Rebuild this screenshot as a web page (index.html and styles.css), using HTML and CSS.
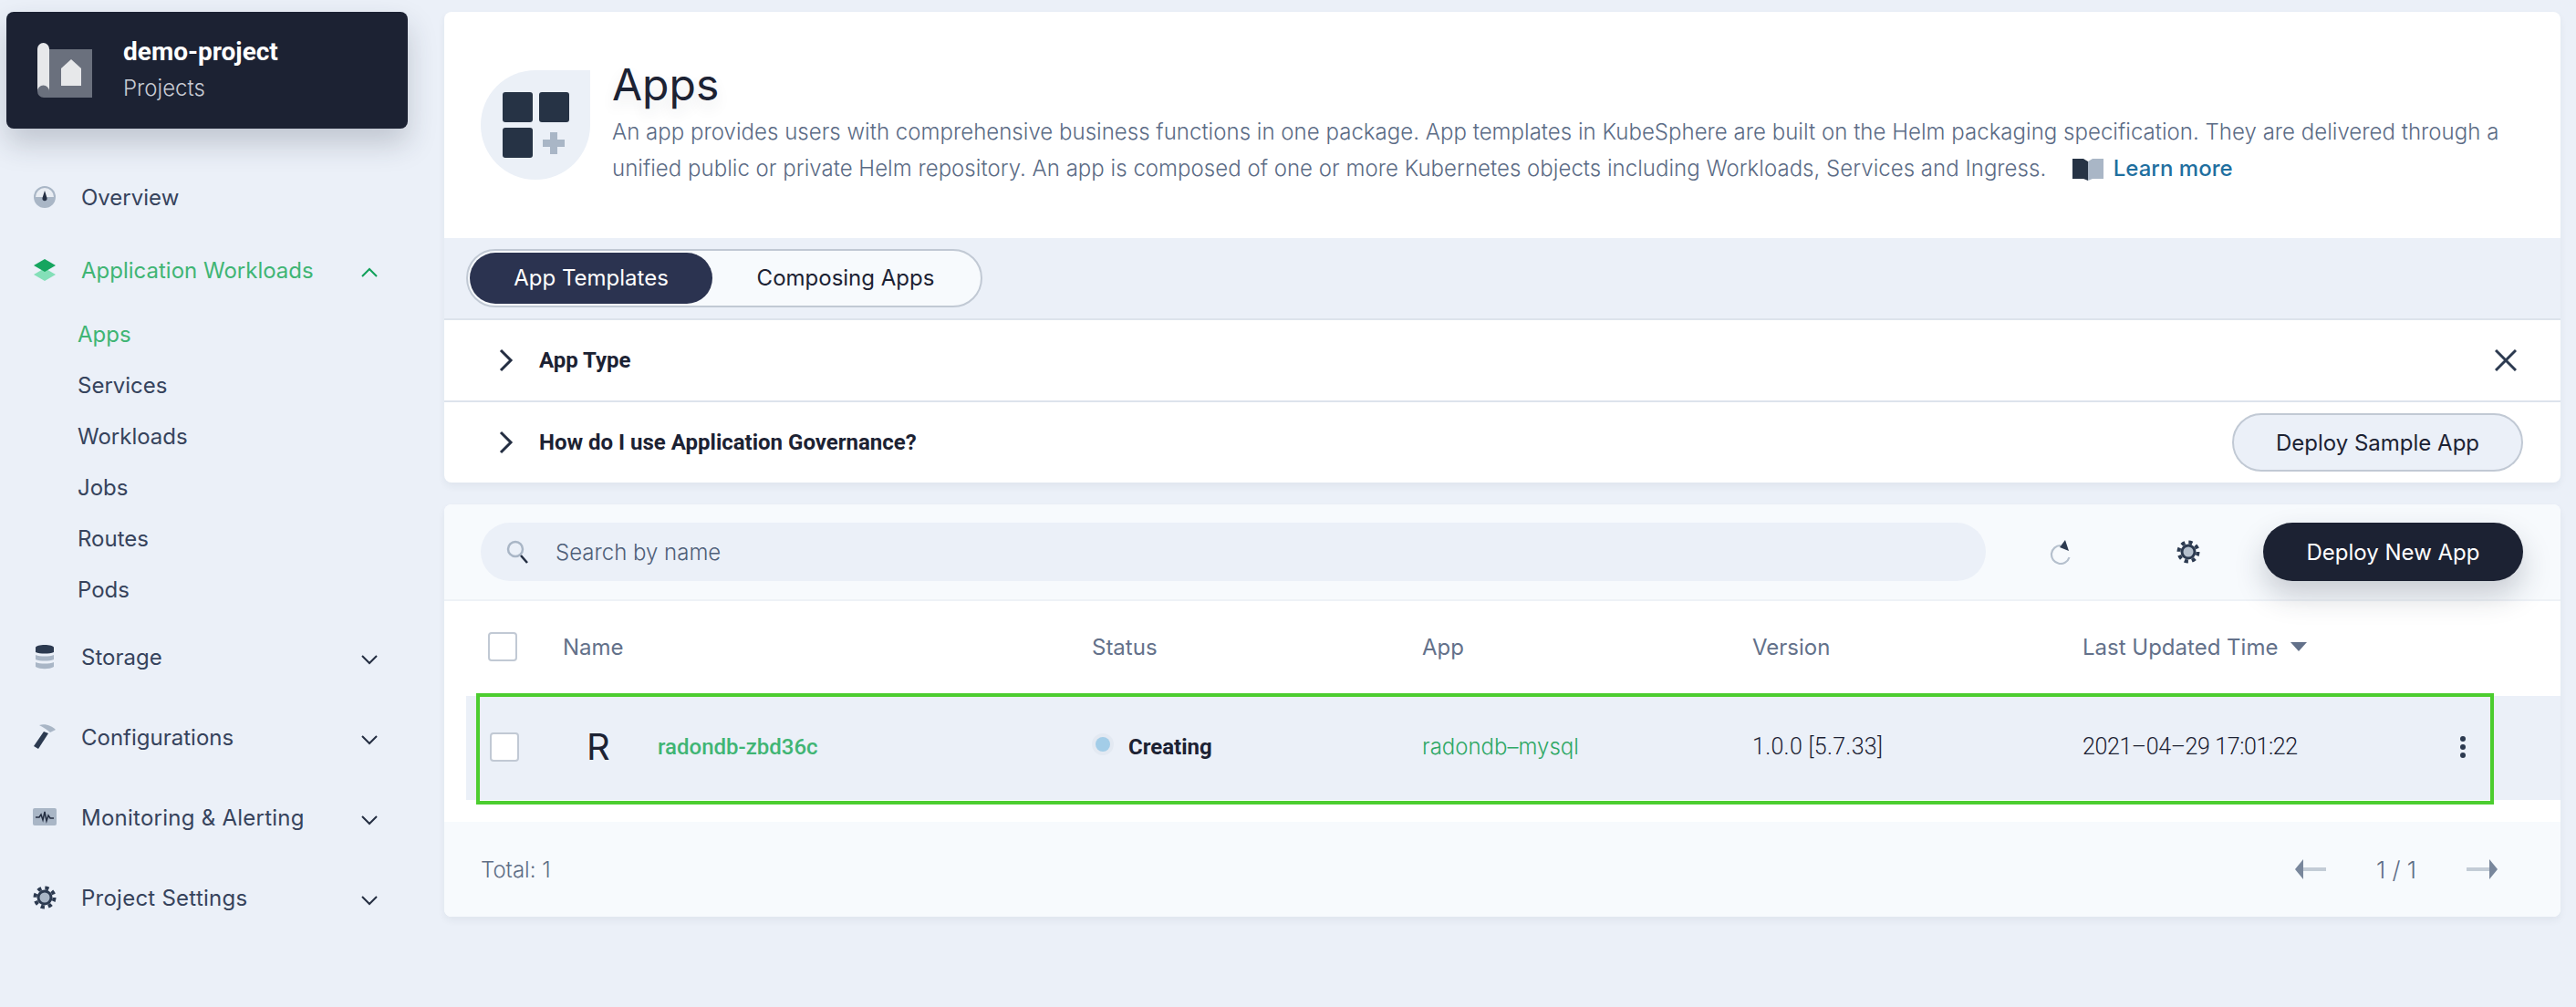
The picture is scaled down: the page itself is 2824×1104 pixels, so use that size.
FILE: index.html
```html
<!DOCTYPE html>
<html lang="en">
<head>
    <meta charset="UTF-8">
    <title>Apps - demo-project</title>
    <link rel="stylesheet" href="styles.css">
</head>
<body>
<div class="page">
    <aside class="sidebar">
        <div class="project-card">
            <svg class="project-logo" width="60" height="60" viewBox="0 0 60 60">
                <path d="M13 7H60V60H7A7 7 0 0 1 0 53V40H13Z" fill="#6a707d"/>
                <path d="M0 6.5A6.5 6.5 0 0 1 13 6.5V53A6.5 6.5 0 0 0 0 53Z" fill="#e7e8ea"/>
                <path d="M37 18L48 28V47H26V28Z" fill="#e7e8ea"/>
            </svg>
            <div>
                <div class="project-name">demo-project</div>
                <div class="project-type">Projects</div>
            </div>
        </div>
        <nav class="nav">
            <div class="nav-item nav-overview">
                <svg class="nav-icon" width="26" height="26" viewBox="0 0 26 26">
                    <circle cx="13" cy="13" r="12" fill="#a9b6c6"/>
                    <path d="M3 13A10 10 0 0 1 23 13Z" fill="#e9edf3"/>
                    <path d="M13 6L15.5 14A2.6 2.6 0 1 1 10.5 14Z" fill="#242e42"/>
                </svg>
                <span>Overview</span>
            </div>
            <div class="nav-item nav-active">
                <svg class="nav-icon" width="26" height="26" viewBox="0 0 26 26">
                    <path d="M13 11L25 18L13 25L1 18Z" fill="#84dfb8"/>
                    <path d="M13 1L25 8L13 15L1 8Z" fill="#16a55f"/>
                </svg>
                <span>Application Workloads</span>
                <svg class="chevron" width="18" height="12" viewBox="0 0 18 12"><path d="M1 10L9 2L17 10" fill="none" stroke="#10a05a" stroke-width="2"/></svg>
            </div>
            <div class="sub-nav">
                <div class="sub-item sub-active">Apps</div>
                <div class="sub-item">Services</div>
                <div class="sub-item">Workloads</div>
                <div class="sub-item">Jobs</div>
                <div class="sub-item">Routes</div>
                <div class="sub-item">Pods</div>
            </div>
            <div class="nav-item">
                <svg class="nav-icon" width="26" height="28" viewBox="0 0 26 28">
                    <path d="M3 12C8 14 18 14 23 12V17C18 19 8 19 3 17ZM3 20C8 22 18 22 23 20V25C18 28 8 28 3 25Z" fill="#a9b6c6"/>
                    <path d="M3 4C3 0 23 0 23 4V9C18 11 8 11 3 9Z" fill="#2c3a50"/>
                </svg>
                <span>Storage</span>
                <svg class="chevron" width="18" height="12" viewBox="0 0 18 12"><path d="M1 2L9 10L17 2" fill="none" stroke="#242e42" stroke-width="2"/></svg>
            </div>
            <div class="nav-item">
                <svg class="nav-icon" width="26" height="28" viewBox="0 0 26 28">
                    <path d="M7 1C14 -1 21 2 25 6L19 9C16 6 12 4 7 1Z" fill="#a9b6c6"/>
                    <path d="M12 8L17 10L6 27L1 24Z" fill="#2c3a50"/>
                </svg>
                <span>Configurations</span>
                <svg class="chevron" width="18" height="12" viewBox="0 0 18 12"><path d="M1 2L9 10L17 2" fill="none" stroke="#242e42" stroke-width="2"/></svg>
            </div>
            <div class="nav-item nav-wide">
                <svg class="nav-icon" width="26" height="20" viewBox="0 0 26 20">
                    <rect width="26" height="19" rx="2" fill="#a9b6c6"/>
                    <path d="M3 10H7L9 7L11 13L13 4L15 14L17 8L19 11H23" fill="none" stroke="#242e42" stroke-width="1.5"/>
                </svg>
                <span>Monitoring &amp; Alerting</span>
                <svg class="chevron" width="18" height="12" viewBox="0 0 18 12"><path d="M1 2L9 10L17 2" fill="none" stroke="#242e42" stroke-width="2"/></svg>
            </div>
            <div class="nav-item nav-wide">
                <svg class="nav-icon" width="26" height="26" viewBox="0 0 26 26">
                    <circle cx="13" cy="13" r="10.5" fill="none" stroke="#2c3a50" stroke-width="4" stroke-dasharray="4.2 4.05"/>
                    <circle cx="13" cy="13" r="7" fill="#a9b6c6" stroke="#2c3a50" stroke-width="3"/>
                </svg>
                <span>Project Settings</span>
                <svg class="chevron" width="18" height="12" viewBox="0 0 18 12"><path d="M1 2L9 10L17 2" fill="none" stroke="#242e42" stroke-width="2"/></svg>
            </div>
        </nav>
    </aside>

    <main class="main">
        <section class="card intro-card">
            <div class="intro">
                <svg class="intro-icon" width="120" height="120" viewBox="0 0 120 120">
                    <path d="M60 0H120V60A60 60 0 0 1 0 60A60 60 0 0 1 60 0Z" fill="#ebf0f7"/>
                    <rect x="24" y="24" width="33" height="33" rx="3" fill="#263345"/>
                    <rect x="64" y="24" width="33" height="33" rx="3" fill="#263345"/>
                    <rect x="24" y="63" width="33" height="33" rx="3" fill="#263345"/>
                    <path d="M76 68H84V76H92V84H84V92H76V84H68V76H76Z" fill="#a9b6c6"/>
                </svg>
                <div class="intro-text">
                    <h1>Apps</h1>
                    <p>An app provides users with comprehensive business functions in one package. App templates in KubeSphere are built on the Helm packaging specification. They are delivered through a<br>unified public or private Helm repository. An app is composed of one or more Kubernetes objects including Workloads, Services and Ingress.
                        <svg class="book" width="34" height="25" viewBox="0 0 34 25">
                            <path d="M0 1H12L17 4V25L12 23H0Z" fill="#263345"/>
                            <path d="M17 4L22 1H34V23H22L17 25Z" fill="#a9b6c6"/>
                        </svg>
                        <a href="#">Learn more</a>
                    </p>
                </div>
            </div>
            <div class="tabs-band">
                <div class="tabs">
                    <div class="tab tab-active">App Templates</div>
                    <div class="tab">Composing Apps</div>
                </div>
            </div>
            <div class="fold-row">
                <svg class="fold-arrow" width="16" height="26" viewBox="0 0 16 26"><path d="M2 2L13 13L2 24" fill="none" stroke="#242e42" stroke-width="3"/></svg>
                <span class="fold-title">App Type</span>
                <svg class="close" width="24" height="24" viewBox="0 0 24 24"><path d="M1 1L23 23M23 1L1 23" fill="none" stroke="#2c3a50" stroke-width="3"/></svg>
            </div>
            <div class="fold-row fold-last">
                <svg class="fold-arrow" width="16" height="26" viewBox="0 0 16 26"><path d="M2 2L13 13L2 24" fill="none" stroke="#242e42" stroke-width="3"/></svg>
                <span class="fold-title">How do I use Application Governance?</span>
                <button class="btn-sample">Deploy Sample App</button>
            </div>
        </section>

        <section class="card list-card">
            <div class="toolbar">
                <div class="search">
                    <svg width="26" height="26" viewBox="0 0 26 26">
                        <circle cx="10" cy="10" r="8" fill="none" stroke="#a9b6c6" stroke-width="2.5"/>
                        <path d="M16 17L23 25" stroke="#242e42" stroke-width="2.5"/>
                    </svg>
                    <span>Search by name</span>
                </div>
                <div class="tool-btn">
                    <svg width="24" height="27" viewBox="0 0 24 27">
                        <path d="M12 6A10 10 0 1 0 21.5 19" fill="none" stroke="#b5c0cd" stroke-width="2.2"/>
                        <path d="M17 0L21 12L11 8Z" fill="#2c3a50"/>
                    </svg>
                </div>
                <div class="tool-btn tool-gear">
                    <svg width="26" height="26" viewBox="0 0 26 26">
                        <circle cx="13" cy="13" r="10.5" fill="none" stroke="#2c3a50" stroke-width="4" stroke-dasharray="4.2 4.05"/>
                        <circle cx="13" cy="13" r="7" fill="#b5c0cd" stroke="#2c3a50" stroke-width="3"/>
                    </svg>
                </div>
                <button class="btn-deploy">Deploy New App</button>
            </div>

            <div class="table-head grid-row">
                <div><span class="checkbox head-check"></span></div>
                <div>Name</div>
                <div>Status</div>
                <div>App</div>
                <div>Version</div>
                <div class="sort-col">Last Updated Time <span class="caret"></span></div>
            </div>
            <div class="table-body">
                <div class="table-row grid-row">
                    <div><span class="checkbox row-check"></span></div>
                    <div class="name-cell"><span class="app-letter">R</span><a href="#" class="app-name">radondb-zbd36c</a></div>
                    <div class="status-cell"><span class="status-dot"></span>Creating</div>
                    <div class="app-cell">radondb–mysql</div>
                    <div class="num-cell version-cell">1.0.0 [5.7.33]</div>
                    <div class="num-cell time-cell">2021–04–29 17:01:22
                        <svg class="kebab" width="8" height="26" viewBox="0 0 8 26"><circle cx="4" cy="4" r="3"/><circle cx="4" cy="13" r="3"/><circle cx="4" cy="22" r="3"/></svg>
                    </div>
                </div>
                <div class="highlight-frame"></div>
            </div>
            <div class="table-foot">
                <span>Total: 1</span>
                <div class="pager">
                    <svg width="34" height="22" viewBox="0 0 34 22"><rect x="8" y="9" width="26" height="4" fill="#c3ccd6"/><path d="M9 0V22L0 11Z" fill="#79879c"/></svg>
                    <span class="pager-text">1 / 1</span>
                    <svg width="34" height="22" viewBox="0 0 34 22"><rect y="9" width="26" height="4" fill="#c3ccd6"/><path d="M25 0V22L34 11Z" fill="#79879c"/></svg>
                </div>
            </div>
        </section>
    </main>
</div>
</body>
</html>
```

FILE: styles.css
```css
* {
    box-sizing: border-box;
}

html, body {
    margin: 0;
    height: 100%;
}

body {
    font-family: Inter, "Liberation Sans", sans-serif;
    font-size: 24px;
    color: #1c2233;
    background-color: #ebf0f8;
    overflow: hidden;
}

.page {
    display: flex;
    height: 1104px;
}

/* sidebar */

.sidebar {
    width: 487px;
    flex-shrink: 0;
    padding-top: 13px;
    padding-left: 7px;
}

.project-card {
    display: flex;
    align-items: center;
    gap: 34px;
    width: 440px;
    height: 128px;
    padding-left: 34px;
    background-color: #1c2233;
    border-radius: 8px;
    box-shadow: 0 16px 32px rgba(36, 46, 66, 0.22);
}

.project-name {
    font-family: Roboto, sans-serif;
    font-size: 28px;
    font-weight: 700;
    line-height: 40px;
    color: #fff;
}

.project-type {
    font-size: 24px;
    font-weight: 300;
    line-height: 40px;
    color: #c7cbd3;
}

.nav {
    margin-top: 51px;
    color: #36435c;
}

.nav-item {
    display: flex;
    align-items: center;
    position: relative;
    height: 48px;
    margin-bottom: 40px;
    padding-left: 82px;
}

.nav-wide {
    letter-spacing: 0.25px;
}

.nav-overview {
    margin-bottom: 32px;
}

.nav-active {
    margin-bottom: 18px;
    color: #3fb574;
}

.nav-icon {
    position: absolute;
    left: 29px;
    top: 50%;
    transform: translateY(-50%);
}

.chevron {
    position: absolute;
    left: 389px;
    top: 21px;
}

.sub-nav {
    margin-bottom: 22px;
}

.sub-item {
    height: 56px;
    line-height: 58px;
    padding-left: 78px;
}

.sub-active {
    color: #3fb574;
}

/* main column */

.main {
    width: 2320px;
    padding-top: 13px;
}

.card {
    background-color: #fff;
    border-radius: 8px;
    box-shadow: 0 4px 8px rgba(36, 46, 66, 0.06);
    overflow: hidden;
}

.intro {
    display: flex;
    gap: 24px;
    height: 248px;
    padding: 64px 0 0 40px;
}

.intro-icon {
    flex-shrink: 0;
}

.intro-text {
    margin-top: -14px;
}

.intro-text h1 {
    margin: 0 0 2px;
    font-size: 48px;
    font-weight: 400;
    line-height: 60px;
    text-shadow: 0 8px 16px rgba(36, 46, 66, 0.1);
}

.intro-text p {
    margin: 0;
    line-height: 40px;
    font-weight: 300;
    letter-spacing: 0.025px;
    color: #5b6b85;
    white-space: nowrap;
}

.intro-text a {
    font-weight: 500;
    color: #1f6f9f;
    text-decoration: none;
}

.book {
    margin: 0 4px 0 22px;
    vertical-align: -5px;
}

.tabs-band {
    height: 90px;
    padding: 12px 0 0 24px;
    background-color: #ebf0f8;
    border-bottom: 2px solid #dde3ec;
}

.tabs {
    display: flex;
    width: 566px;
    height: 64px;
    padding: 2px;
    background-color: #f7fafd;
    border: 2px solid #c1c9d4;
    border-radius: 32px;
}

.tab {
    width: 266px;
    height: 56px;
    line-height: 56px;
    text-align: center;
    border-radius: 28px;
}

.tab + .tab {
    flex: 1;
}

.tab-active {
    color: #fff;
    background-color: #2b3350;
}

.fold-row {
    display: flex;
    align-items: center;
    height: 90px;
    padding: 0 41px 0 60px;
    border-bottom: 2px solid #dde3ec;
}

.fold-last {
    height: 88px;
    border-bottom: none;
}

.fold-arrow {
    flex-shrink: 0;
    margin-right: 28px;
}

.fold-title {
    flex: 1;
    font-family: Roboto, sans-serif;
    font-weight: 700;
}

.close {
    margin-right: 7px;
}

.btn-sample {
    width: 319px;
    height: 64px;
    font-family: inherit;
    font-size: 24px;
    color: #1c2233;
    background-color: #ebf0f8;
    border: 2px solid #c1c9d4;
    border-radius: 32px;
}

/* list */

.list-card {
    height: 452px;
    margin-top: 24px;
}

.toolbar {
    display: flex;
    align-items: center;
    height: 106px;
    padding: 0 41px 0 40px;
    background-color: #f7fafd;
    border-bottom: 2px solid #eef2f7;
}

.search {
    display: flex;
    align-items: center;
    flex: 1;
    gap: 28px;
    height: 64px;
    padding-left: 28px;
    font-weight: 300;
    color: #4f5f79;
    background-color: #ebf0f8;
    border-radius: 32px;
}

.tool-btn {
    display: flex;
    align-items: center;
    justify-content: center;
    width: 64px;
    height: 64px;
    margin-left: 50px;
}

.tool-gear {
    margin-left: 76px;
}

.btn-deploy {
    width: 285px;
    height: 64px;
    margin-left: 50px;
    font-family: inherit;
    font-size: 24px;
    color: #fff;
    background-color: #1c2233;
    border: none;
    border-radius: 32px;
    box-shadow: 0 16px 32px rgba(36, 46, 66, 0.22);
}

.grid-row {
    display: grid;
    grid-template-columns: 106px 580px 362px 362px 362px 500px;
    align-items: center;
}

.table-head {
    height: 104px;
    margin-left: 24px;
    padding-bottom: 4px;
    color: #63718a;
}

.checkbox {
    display: block;
    width: 32px;
    height: 32px;
    background-color: #fff;
    border: 2px solid #c1c9d4;
    border-radius: 4px;
}

.head-check {
    margin-left: 24px;
}

.row-check {
    margin-left: 26px;
}

.sort-col {
    display: flex;
    align-items: center;
    gap: 14px;
}

.caret {
    width: 0;
    height: 0;
    border-left: 9px solid transparent;
    border-right: 9px solid transparent;
    border-top: 10px solid #63718a;
}

.table-body {
    position: relative;
    height: 138px;
    padding-left: 24px;
}

.table-row {
    height: 114px;
    padding-bottom: 3px;
    background-color: #ebf0f8;
}

.name-cell {
    display: flex;
    align-items: center;
}

.app-letter {
    width: 104px;
    padding-left: 26px;
    font-size: 40px;
}

.app-name {
    font-family: Roboto, sans-serif;
    font-weight: 500;
    color: #3fb574;
    text-decoration: none;
}

.status-cell {
    display: flex;
    align-items: center;
    font-family: Roboto, sans-serif;
    font-weight: 700;
}

.status-dot {
    width: 16px;
    height: 16px;
    margin: -6px 20px 0 4px;
    background-color: #a3cde8;
    border-radius: 50%;
    box-shadow: 0 0 0 4px #e3e9f2;
}

.app-cell {
    font-weight: 300;
    color: #2fa866;
}

.num-cell {
    font-family: Roboto, sans-serif;
    font-size: 25px;
    font-weight: 300;
}

.version-cell {
    letter-spacing: 0.3px;
}

.time-cell {
    display: flex;
    align-items: center;
    position: relative;
    letter-spacing: -0.4px;
}

.kebab {
    position: absolute;
    left: 413px;
    fill: #2c3a50;
}

/* green annotation box drawn over the row */
.highlight-frame {
    position: absolute;
    left: 35px;
    top: -3px;
    width: 2212px;
    height: 122px;
    border: 4px solid #4ccd2f;
}

.table-foot {
    display: flex;
    align-items: center;
    justify-content: space-between;
    height: 104px;
    padding: 0 69px 0 40px;
    font-weight: 300;
    color: #5f6e86;
    background-color: #f7fafd;
}

.pager {
    display: flex;
    align-items: center;
}

.pager-text {
    width: 154px;
    text-align: center;
    font-size: 26px;
}
```
